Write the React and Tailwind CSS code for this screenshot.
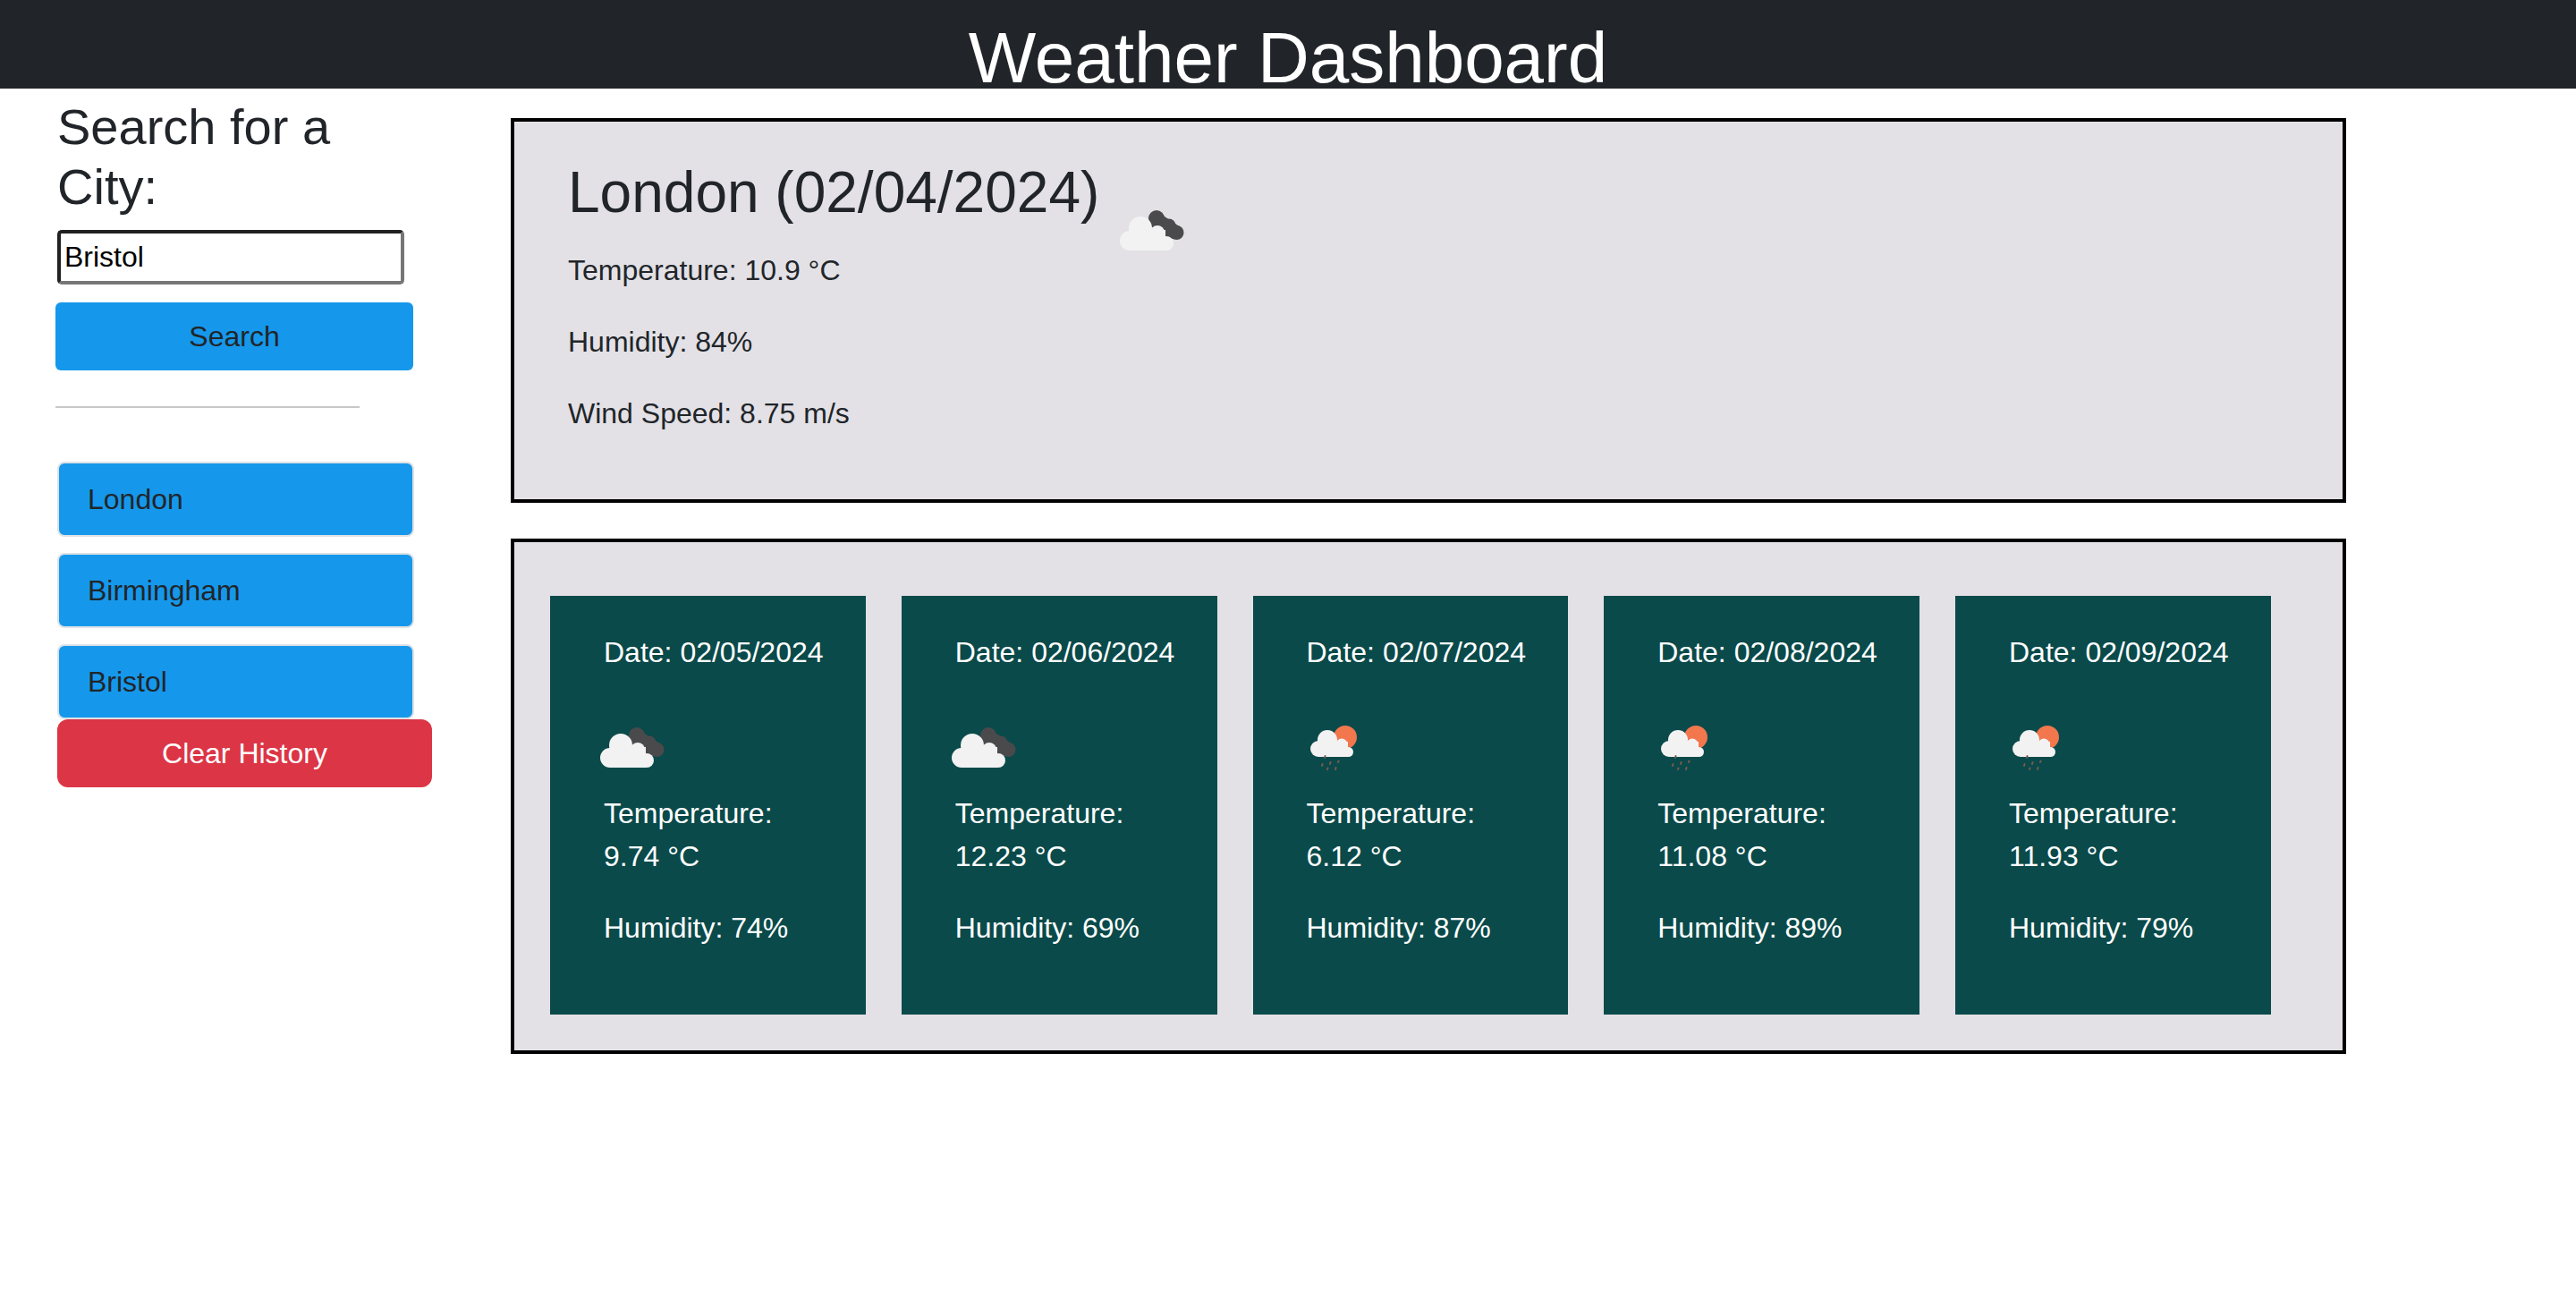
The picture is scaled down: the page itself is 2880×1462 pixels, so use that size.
const forecast = [
  { date: '02/05/2024', temp: '9.74', humidity: '74', icon: 'clouds' },
  { date: '02/06/2024', temp: '12.23', humidity: '69', icon: 'clouds' },
  { date: '02/07/2024', temp: '6.12', humidity: '87', icon: 'rain' },
  { date: '02/08/2024', temp: '11.08', humidity: '89', icon: 'rain' },
  { date: '02/09/2024', temp: '11.93', humidity: '79', icon: 'rain' },
]

const history = ['London', 'Birmingham', 'Bristol']

const CloudsIcon = ({ className }) => (
  <svg viewBox="0 0 100 100" className={className}>
    {/* dark cloud behind */}
    <g fill="#4a4a4c">
      <circle cx="61" cy="37" r="9" />
      <circle cx="75" cy="45" r="7.5" />
      <circle cx="83.5" cy="53" r="8" />
      <path d="M55 31 L70 35 L88 47 L86 60 L65 60 L52 42 Z" />
    </g>
    {/* white cloud */}
    <g fill="#f2f2f2">
      <circle cx="31" cy="62" r="11" />
      <circle cx="43" cy="48" r="13" />
      <circle cx="62" cy="53" r="8" />
      <circle cx="72" cy="65" r="8" />
      <rect x="31" y="50" width="40" height="23" />
    </g>
  </svg>
)

const RainIcon = ({ className }) => (
  <svg viewBox="0 0 100 100" className={className}>
    <circle cx="67" cy="39" r="13" fill="#f2774d" />
    <g fill="#f2f2f2">
      <circle cx="37" cy="52" r="9" />
      <circle cx="47" cy="42" r="11" />
      <circle cx="63" cy="47" r="6.5" />
      <circle cx="70.5" cy="55.5" r="5.5" />
      <rect x="37" y="44" width="33" height="17" />
    </g>
    <g stroke="#7a5a50" strokeWidth="2" strokeLinecap="round">
      <path d="M44.5 60 L44 62" />
      <path d="M41.5 69 L41 71" />
      <path d="M50.5 67 L50 69" />
      <path d="M59.5 65.5 L59 67" />
      <path d="M47.5 73.5 L47 75" />
      <path d="M56.5 73 L56 75" />
    </g>
  </svg>
)

const App = () => {
  return (
    <div className="min-h-[1462px] bg-white font-['Liberation_Sans',Arial,sans-serif] text-[32px] leading-[48px] text-[#212529]">

      {/* header */}
      <header className="h-[99px] bg-[#212529] text-center">
        <h1 className="text-[80px] leading-[66px] text-white pt-[32px]">Weather Dashboard</h1>
      </header>

      <div className="flex">

        {/* sidebar */}
        <aside className="w-[571px] shrink-0 pl-[64px] pt-[9px]">
          <h3 className="w-[420px] text-[56px] leading-[67px]">Search for a City:</h3>
          <input
            readOnly
            value="Bristol"
            className="block mt-[15px] w-[388px] h-[61px] px-[4px] rounded-[5px] border-[4px] border-t-[#212121] border-l-[#212121] border-r-[#767676] border-b-[#767676] bg-white text-black text-[32px] outline-none"
          />
          <button className="block -ml-[2px] mt-[20px] w-[400px] h-[76px] rounded-[6px] bg-[#1598eb] text-center">Search</button>
          <hr className="-ml-[2px] mt-[40px] w-[340px] border-t-[2px] border-[#c8c8c8]" />

          <ul className="mt-[60px] w-[399px] flex flex-col gap-[18px]">
            {history.map((city) => (
              <li key={city} className="h-[84px] px-[32px] py-[16px] border-[2px] border-[#dee2e6] rounded-[8px] bg-[#1598eb]">{city}</li>
            ))}
          </ul>
          <button className="block w-[419px] h-[76px] rounded-[12px] bg-[#dc3545] text-white text-center">Clear History</button>
        </aside>

        {/* main */}
        <main className="w-[2052px] shrink-0 pt-[33px]">
          <section className="h-[430px] border-[4px] border-black bg-[#e3e1e6] pl-[60px] pt-[41px]">
            <h2 className="flex items-start h-[101px] text-[64px] leading-[77px]">
              London (02/04/2024)
              <CloudsIcon className="w-[100px] h-[100px] ml-[3px] mt-[30px] shrink-0 blur-[0.5px]" />
            </h2>
            <p className="mb-[32px]">Temperature: 10.9 °C</p>
            <p className="mb-[32px]">Humidity: 84%</p>
            <p>Wind Speed: 8.75 m/s</p>
          </section>

          <section className="mt-[40px] h-[576px] border-[4px] border-black bg-[#e3e1e6] pl-[40px] pt-[60px]">
            <div className="flex gap-[40px]">
              {forecast.map((day) => (
                <div key={day.date} className="w-[352.75px] h-[468px] bg-[#0a4a4a] text-white pl-[60px] pr-[40px] pt-[39px]">
                  <p className="mb-[32px]">Date: {day.date}</p>
                  {day.icon === 'clouds'
                    ? <CloudsIcon className="block w-[100px] h-[100px] -ml-[24px] blur-[0.5px]" />
                    : <RainIcon className="block w-[100px] h-[100px] -ml-[24px] blur-[0.5px]" />}
                  <p className="mb-[32px]">Temperature: {day.temp} °C</p>
                  <p>Humidity: {day.humidity}%</p>
                </div>
              ))}
            </div>
          </section>
        </main>

      </div>
    </div>
  )
}

export default App
